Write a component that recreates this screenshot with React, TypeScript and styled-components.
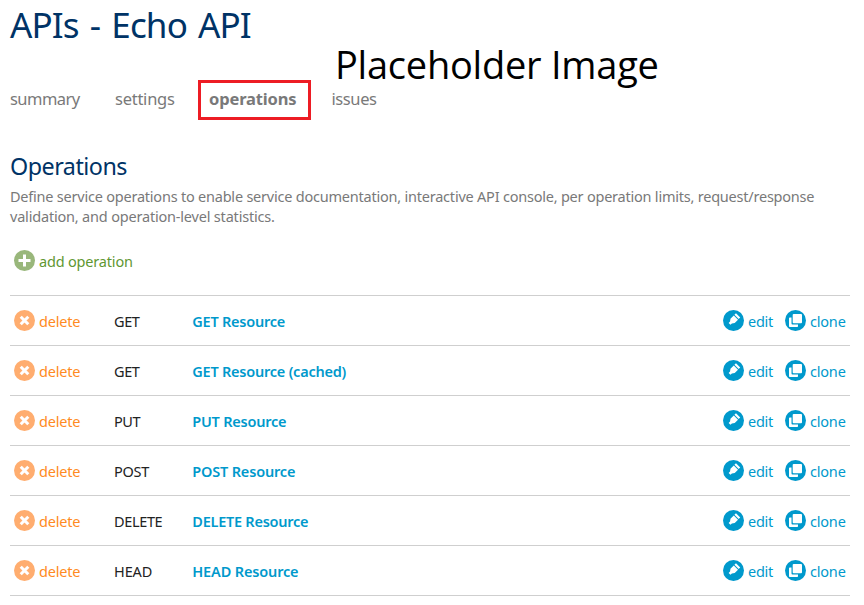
import React from "react";
import styled, { createGlobalStyle } from "styled-components";

const GlobalStyle = createGlobalStyle`
  * { box-sizing: border-box; }
  body {
    margin: 0;
    background: #fff;
    font-family: "Noto Sans", sans-serif;
    font-size: 14.5px;
    line-height: 20px;
    color: #797979;
    overflow: hidden;
  }
`;

const Page = styled.main`
  position: relative;
  width: 864px;
  height: 605px;
  padding: 0 14px 0 10px;
`;

const Title = styled.h1`
  margin: 0;
  height: 80px;
  padding-top: 1px;
  font-size: 35px;
  line-height: 48px;
  font-weight: 400;
  letter-spacing: -0.85px;
  word-spacing: 2.8px;
  color: #003366;
  white-space: nowrap;
`;

const Watermark = styled.div`
  position: absolute;
  left: 335px;
  top: 44px;
  font: 400 38px/40px "Open Sans", sans-serif;
  letter-spacing: -0.24px;
  color: #000;
  white-space: nowrap;
`;

const Tabs = styled.nav`
  display: flex;
  height: 40px;
`;

const Tab = styled.a<{ $width: number; $spacing: number }>`
  width: ${(p) => p.$width}px;
  line-height: 38px;
  font-size: 16.5px;
  letter-spacing: ${(p) => p.$spacing}px;
  white-space: nowrap;
`;

const ActiveTab = styled(Tab)`
  height: 40px;
  margin-right: 20.5px;
  padding-left: 8px;
  border: 3px solid #ed1c24;
  line-height: 32px;
  font-weight: 700;
`;

const Heading = styled.h2`
  margin: 31px 0 5px;
  font-size: 23.3px;
  line-height: 30px;
  font-weight: 400;
  letter-spacing: -0.5px;
  color: #003366;
`;

const Line = styled.span<{ $spacing: number }>`
  display: block;
  letter-spacing: ${(p) => p.$spacing}px;
  white-space: nowrap;
`;

const Action = styled.a<{ $color: string; $spacing: number }>`
  display: flex;
  align-items: center;
  gap: 4px;
  color: ${(p) => p.$color};
  letter-spacing: ${(p) => p.$spacing}px;
  white-space: nowrap;

  svg {
    flex: none;
    margin-top: -2px;
  }
`;

const AddBar = styled.div`
  display: flex;
  height: 69px;
  padding: 25px 0 0 4px;
  align-items: flex-start;
`;

const List = styled.ul`
  margin: 0;
  padding: 0;
  list-style: none;
  border-top: 1px solid #cfcfcf;
`;

const Row = styled.li`
  display: grid;
  grid-template-columns: 100px 78.3px 1fr 62px 61px;
  align-items: center;
  height: 50px;
  padding: 0 4px;
  border-bottom: 1px solid #cfcfcf;
`;

const RowAction = styled(Action)`
  svg {
    margin-top: 0;
  }
`;

const Method = styled.span<{ $spacing: number }>`
  color: #222;
  letter-spacing: ${(p) => p.$spacing}px;
`;

const Name = styled.a<{ $spacing: number }>`
  font-weight: 600;
  color: #0099cc;
  letter-spacing: ${(p) => p.$spacing}px;
`;

const Disc = ({ color, children }: { color: string; children: React.ReactNode }) => (
  <svg width="21" height="21" viewBox="0 0 21 21">
    <circle cx="10.5" cy="10.5" r="10.5" fill={color} />
    {children}
  </svg>
);

const PlusIcon = () => (
  <Disc color="#99b77b">
    <path d="M9 4.500h3V9h4.500v3H12v4.500H9V12H4.500V9H9z" fill="#fff" />
  </Disc>
);

const DeleteIcon = () => (
  <Disc color="#ffad6f">
    <path d="M6.700 6.700l7.600 7.600M14.300 6.700l-7.600 7.600" stroke="#fff" strokeWidth="3" />
  </Disc>
);

const EditIcon = () => (
  <Disc color="#0099cc">
    <g transform="translate(11 9.500) rotate(45)" fill="#fff">
      <path d="M-3 -5.800h6v2.200h-6zM-3 -2.700h6v4.700L1.300 4.300v2h-2.600v-2L-3 2z" />
    </g>
  </Disc>
);

const CloneIcon = () => (
  <Disc color="#0099cc">
    <path d="M4.800 7.500H6.500V13.600Q6.500 14.500 7.400 14.500H13V16.200Q13 17 12.200 17H4.800Q4 17 4 16.200V8.300Q4 7.500 4.800 7.500z" fill="#fff" />
    <rect x="7.700" y="4" width="9.300" height="9.300" rx="1" fill="#fff" />
  </Disc>
);

const operations = [
  { method: "GET", name: "GET Resource", ms: -0.4, ns: -0.23 },
  { method: "GET", name: "GET Resource (cached)", ms: -0.4, ns: -0.23 },
  { method: "PUT", name: "PUT Resource", ms: -0.4, ns: -0.22 },
  { method: "POST", name: "POST Resource", ms: -0.3, ns: -0.18 },
  { method: "DELETE", name: "DELETE Resource", ms: -0.35, ns: -0.25 },
  { method: "HEAD", name: "HEAD Resource", ms: -0.1, ns: -0.15 },
];

export default function App() {
  return (
    <>
      <GlobalStyle />
      <Page>
        <Title>APIs - Echo API</Title>
        <Watermark>Placeholder Image</Watermark>
        <Tabs>
          <Tab $width={105} $spacing={-0.55}>summary</Tab>
          <Tab $width={83} $spacing={-0.25}>settings</Tab>
          <ActiveTab $width={113} $spacing={-0.15}>operations</ActiveTab>
          <Tab $width={60} $spacing={-0.4}>issues</Tab>
        </Tabs>
        <Heading>Operations</Heading>
        <Line $spacing={-0.22}>
          Define service operations to enable service documentation, interactive API console, per
          operation limits, request/response
        </Line>
        <Line $spacing={-0.19}>validation, and operation-level statistics.</Line>
        <AddBar>
          <Action $color="#5f9732" $spacing={-0.18}>
            <PlusIcon />
            add operation
          </Action>
        </AddBar>
        <List>
          {operations.map((op) => (
            <Row key={op.name}>
              <RowAction $color="#ff8a22" $spacing={-0.2}>
                <DeleteIcon />
                delete
              </RowAction>
              <Method $spacing={op.ms}>{op.method}</Method>
              <Name $spacing={op.ns}>{op.name}</Name>
              <RowAction $color="#0099cc" $spacing={-0.3}>
                <EditIcon />
                edit
              </RowAction>
              <RowAction $color="#0099cc" $spacing={-0.2}>
                <CloneIcon />
                clone
              </RowAction>
            </Row>
          ))}
        </List>
      </Page>
    </>
  );
}
